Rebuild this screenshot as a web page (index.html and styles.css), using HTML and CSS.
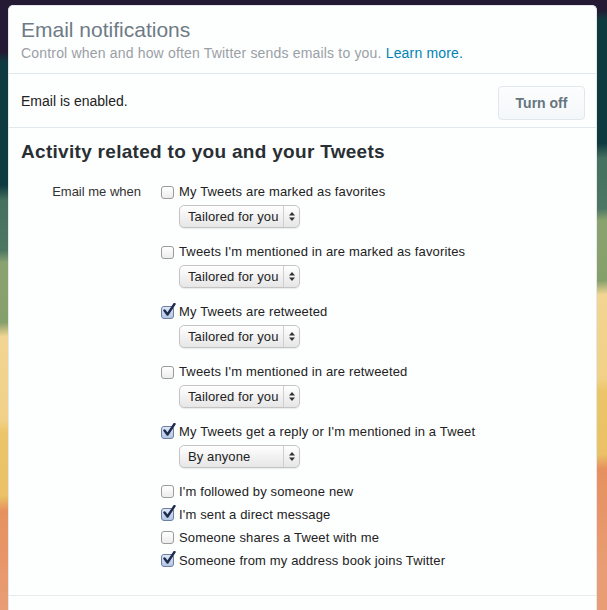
FILE: index.html
```html
<!DOCTYPE html>
<html>
<head>
<meta charset="utf-8">
<link rel="stylesheet" href="styles.css">
</head>
<body>
<div class="card">
  <div class="header">
    <h1 class="title">Email notifications</h1>
    <p class="subtitle">Control when and how often Twitter sends emails to you. <a class="link" href="#">Learn more.</a></p>
  </div>
  <div class="status">
    <span class="status-text">Email is enabled.</span>
    <button class="btn">Turn off</button>
  </div>
  <div class="section">
    <h2 class="section-title">Activity related to you and your Tweets</h2>
    <div class="form">
      <div class="form-label">Email me when</div>
      <div class="options">
        <div class="item">
          <label class="opt"><span class="cb"></span>My Tweets are marked as favorites</label>
          <div class="select"><span class="select-text">Tailored for you</span><span class="arrows"><svg width="6" height="9" viewBox="0 0 6 9"><path d="M3 0L6 3.5H0Z M3 9L6 5.5H0Z" fill="#333"/></svg></span></div>
        </div>
        <div class="item">
          <label class="opt"><span class="cb"></span>Tweets I'm mentioned in are marked as favorites</label>
          <div class="select"><span class="select-text">Tailored for you</span><span class="arrows"><svg width="6" height="9" viewBox="0 0 6 9"><path d="M3 0L6 3.5H0Z M3 9L6 5.5H0Z" fill="#333"/></svg></span></div>
        </div>
        <div class="item">
          <label class="opt"><span class="cb checked"><svg width="14" height="15" viewBox="0 0 14 15"><path d="M2.5 7.5L5.5 11.5L12.5 1" stroke="#1d2b4d" stroke-width="2.4" fill="none" stroke-linecap="round" stroke-linejoin="round"/></svg></span>My Tweets are retweeted</label>
          <div class="select"><span class="select-text">Tailored for you</span><span class="arrows"><svg width="6" height="9" viewBox="0 0 6 9"><path d="M3 0L6 3.5H0Z M3 9L6 5.5H0Z" fill="#333"/></svg></span></div>
        </div>
        <div class="item">
          <label class="opt"><span class="cb"></span>Tweets I'm mentioned in are retweeted</label>
          <div class="select"><span class="select-text">Tailored for you</span><span class="arrows"><svg width="6" height="9" viewBox="0 0 6 9"><path d="M3 0L6 3.5H0Z M3 9L6 5.5H0Z" fill="#333"/></svg></span></div>
        </div>
        <div class="item">
          <label class="opt"><span class="cb checked"><svg width="14" height="15" viewBox="0 0 14 15"><path d="M2.5 7.5L5.5 11.5L12.5 1" stroke="#1d2b4d" stroke-width="2.4" fill="none" stroke-linecap="round" stroke-linejoin="round"/></svg></span>My Tweets get a reply or I'm mentioned in a Tweet</label>
          <div class="select"><span class="select-text">By anyone</span><span class="arrows"><svg width="6" height="9" viewBox="0 0 6 9"><path d="M3 0L6 3.5H0Z M3 9L6 5.5H0Z" fill="#333"/></svg></span></div>
        </div>
        <div class="list">
          <label class="opt"><span class="cb"></span>I'm followed by someone new</label>
          <label class="opt"><span class="cb checked"><svg width="14" height="15" viewBox="0 0 14 15"><path d="M2.5 7.5L5.5 11.5L12.5 1" stroke="#1d2b4d" stroke-width="2.4" fill="none" stroke-linecap="round" stroke-linejoin="round"/></svg></span>I'm sent a direct message</label>
          <label class="opt"><span class="cb"></span>Someone shares a Tweet with me</label>
          <label class="opt"><span class="cb checked"><svg width="14" height="15" viewBox="0 0 14 15"><path d="M2.5 7.5L5.5 11.5L12.5 1" stroke="#1d2b4d" stroke-width="2.4" fill="none" stroke-linecap="round" stroke-linejoin="round"/></svg></span>Someone from my address book joins Twitter</label>
        </div>
      </div>
    </div>
  </div>
  <div class="footer"></div>
</div>
</body>
</html>
```
FILE: styles.css
```css
html, body {
  margin: 0;
  padding: 0;
  height: 100%;
  overflow: hidden;
}
body {
  font-family: "Liberation Sans", Arial, sans-serif;
  color: #333;
  background: linear-gradient(176deg,
    #241a33 0px, #241a33 52px,
    #0f3a40 62px, #0f3a40 185px,
    #46705f 200px, #4d7663 250px,
    #8aa26f 262px, #86a06c 322px,
    #f2d593 336px, #f1d187 420px,
    #ebc567 432px, #eac265 495px,
    #e6905f 510px, #e99d74 610px);
  padding: 5px 10px 0 8px;
  box-sizing: border-box;
}
.card {
  background: #fdfefe;
  border-radius: 5px 5px 0 0;
  border: 1px solid #e4e8ea;
  border-bottom: none;
  height: 620px;
  box-sizing: border-box;
}
.header {
  padding: 12px 12px 11px 12px;
  border-bottom: 1px solid #e1e8ed;
}
.title {
  margin: 0;
  font-size: 21px;
  font-weight: normal;
  line-height: 24px;
  color: #6e7b85;
}
.subtitle {
  margin: 2px 0 0;
  font-size: 14px;
  line-height: 18px;
  letter-spacing: 0.18px;
  color: #9aa0a5;
}
.link {
  color: #0084b4;
  text-decoration: none;
}
.status {
  display: flex;
  align-items: center;
  justify-content: space-between;
  padding: 12px 11px 7px 12px;
  border-bottom: 1px solid #e1e8ed;
}
.status-text {
  font-size: 14px;
  color: #222;
  margin-top: -4px;
}
.btn {
  font-family: "Liberation Sans", Arial, sans-serif;
  font-size: 14px;
  font-weight: bold;
  color: #66757f;
  background: linear-gradient(#fcfdfd, #f4f7f9);
  border: 1px solid #e1e8ed;
  border-radius: 4px;
  width: 87px;
  height: 34px;
  padding: 0;
}
.section {
  padding: 13px 12px 0 12px;
  border-bottom: 1px solid #e8ebed;
  height: 468px;
  box-sizing: border-box;
}
.section-title {
  margin: 0;
  font-size: 19px;
  line-height: 22px;
  letter-spacing: 0.3px;
  font-weight: bold;
  color: #292f33;
}
.form {
  display: flex;
  margin-top: 20px;
  font-size: 13px;
}
.form-label {
  width: 120px;
  text-align: right;
  line-height: 18px;
  color: #333;
  flex: none;
}
.options {
  margin-left: 20px;
  display: flex;
  flex-direction: column;
}
.item {
  display: flex;
  flex-direction: column;
  margin-bottom: 15px;
}
.opt {
  display: flex;
  align-items: center;
  line-height: 18px;
  height: 18px;
  color: #222;
  letter-spacing: 0.15px;
}
.list .opt {
  height: 23px;
  line-height: 23px;
}
.list {
  margin-top: -3px;
}
.cb {
  position: relative;
  width: 11px;
  height: 11px;
  border: 1px solid #9b9b9b;
  border-radius: 3px;
  background: linear-gradient(#ffffff, #ececec);
  margin-right: 5px;
  flex: none;
}
.cb.checked {
  background: linear-gradient(#dfe8f6, #b3c6e5);
  border-color: #6b7ea3;
}
.cb svg {
  position: absolute;
  left: 0;
  top: -4px;
}
.select {
  margin: 4px 0 0 18px;
  width: 121px;
  height: 23px;
  box-sizing: border-box;
  border: 1px solid #c4c4c4;
  border-radius: 5px;
  background: linear-gradient(#ffffff, #f2f2f2 50%, #e6e6e6);
  box-shadow: 0 1px 1px rgba(0,0,0,0.08);
  display: flex;
  align-items: center;
}
.select-text {
  flex: 1;
  padding-left: 8px;
  color: #222;
  font-size: 13px;
  letter-spacing: 0.1px;
}
.arrows {
  width: 15px;
  height: 100%;
  border-left: 1px solid #cfcfcf;
  display: flex;
  align-items: center;
  justify-content: center;
}
```
